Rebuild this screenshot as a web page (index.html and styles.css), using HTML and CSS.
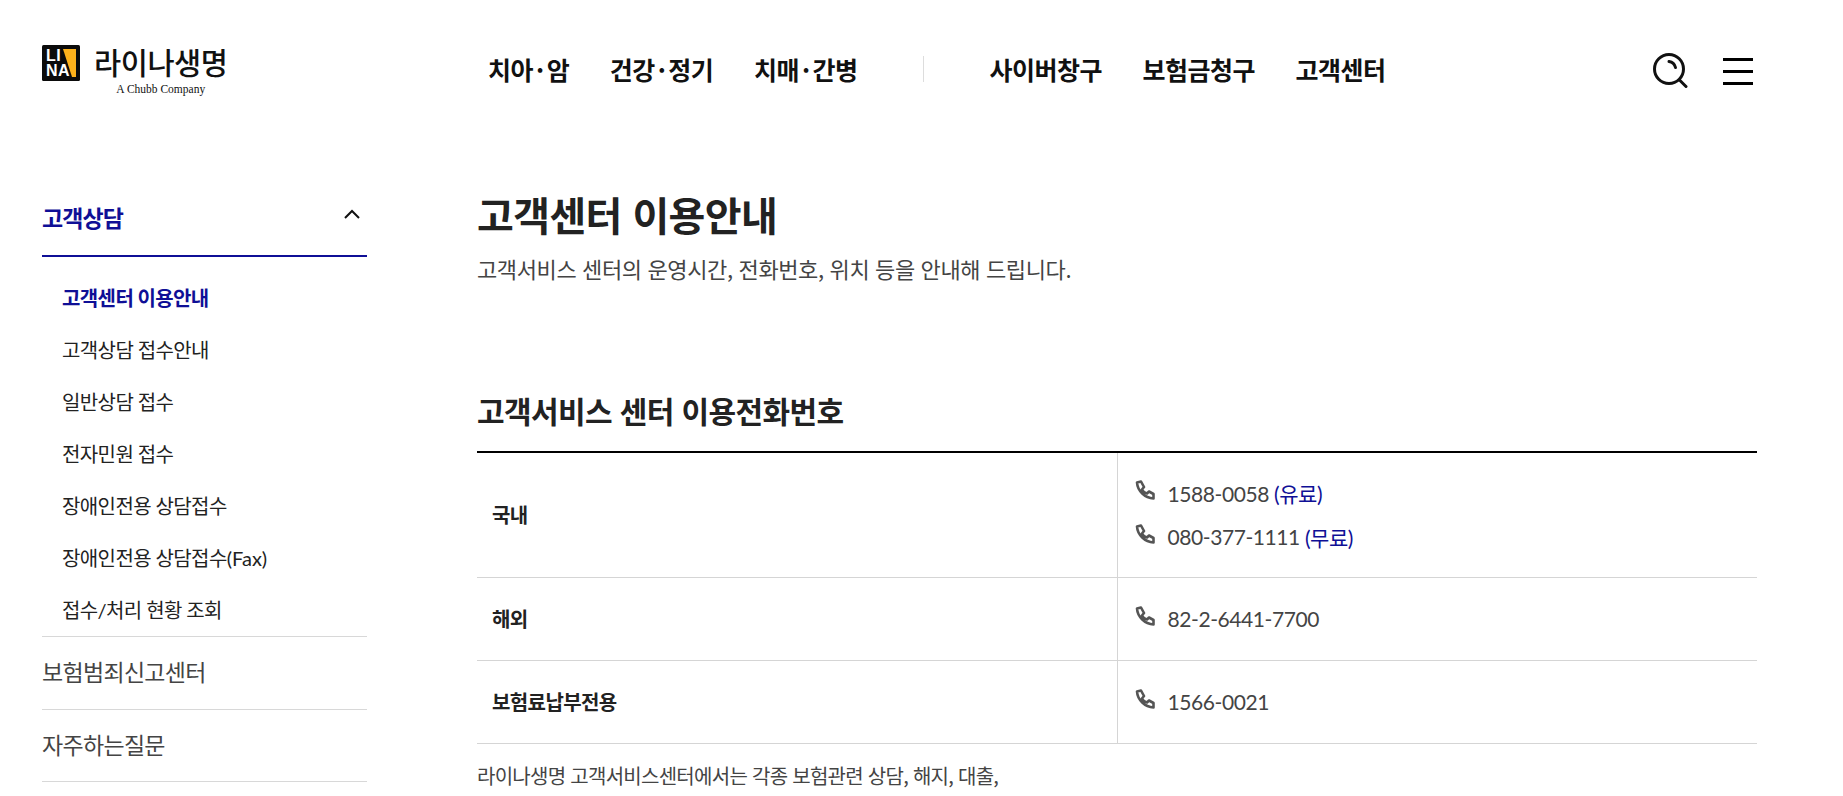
FILE: index.html
```html
<!DOCTYPE html>
<html lang="ko">
<head>
<meta charset="UTF-8" />
<title>고객센터 이용안내 | 라이나생명</title>
<link rel="stylesheet" href="styles.css">
</head>
<body>

<header class="header">
  <a class="logo" href="#">
    <svg class="logo-mark" width="38" height="36" viewBox="0 0 38 36">
      <rect width="38" height="36" rx="1.5" fill="#0b0b0b"/>
      <path d="M21 4 H34 V32 H30 Z" fill="#fdb11b"/>
    </svg>
    <span class="logo-li">LI</span>
    <span class="logo-na">NA</span>
    <span class="logo-text">
      <span class="logo-name">라이나생명</span>
      <span class="logo-sub">A Chubb Company</span>
    </span>
  </a>
  <nav class="gnb">
    <a href="#">치아<span class="dot">·</span>암</a>
    <a href="#">건강<span class="dot">·</span>정기</a>
    <a href="#">치매<span class="dot">·</span>간병</a>
    <span class="gnb-line"></span>
    <a href="#">사이버창구</a>
    <a href="#">보험금청구</a>
    <a href="#">고객센터</a>
  </nav>
  <div class="header-icons">
    <svg width="36" height="36" viewBox="0 0 36 36" fill="none" stroke="#111" stroke-linecap="round">
      <circle cx="17" cy="16" r="14.500" stroke-width="3"/>
      <path d="M17 8.500 a8 8 0 0 1 6.500 6" stroke-width="3"/>
      <path d="M27.500 27 L34 33.500" stroke-width="3"/>
    </svg>
    <div class="menu-btn"><i></i><i></i><i></i></div>
  </div>
</header>

<div class="wrap">
  <aside class="side">
    <div class="side-head">
      <span>고객상담</span>
      <svg width="16" height="10" viewBox="0 0 16 10" fill="none" stroke="#111" stroke-width="2"><path d="M1 9 L8 2 L15 9"/></svg>
    </div>
    <ul class="side-sub">
      <li class="on">고객센터 이용안내</li>
      <li>고객상담 접수안내</li>
      <li>일반상담 접수</li>
      <li>전자민원 접수</li>
      <li>장애인전용 상담접수</li>
      <li>장애인전용 상담접수<span class="en">(Fax)</span></li>
      <li>접수/처리 현황 조회</li>
    </ul>
    <div class="side-item">보험범죄신고센터</div>
    <div class="side-item">자주하는질문</div>
  </aside>

  <main class="main">
    <h1>고객센터 이용안내</h1>
    <p class="lead">고객서비스 센터의 운영시간, 전화번호, 위치 등을 안내해 드립니다.</p>

    <h2>고객서비스 센터 이용전화번호</h2>
    <table class="tel-table">
      <tr class="row-double">
        <th>국내</th>
        <td>
          <div class="tel"><svg class="ico"><use href="#phone"/></svg>1588-0058 <em>(유료)</em></div>
          <div class="tel"><svg class="ico"><use href="#phone"/></svg>080-377-1111 <em>(무료)</em></div>
        </td>
      </tr>
      <tr>
        <th>해외</th>
        <td><div class="tel"><svg class="ico"><use href="#phone"/></svg>82-2-6441-7700</div></td>
      </tr>
      <tr>
        <th>보험료납부전용</th>
        <td><div class="tel"><svg class="ico"><use href="#phone"/></svg>1566-0021</div></td>
      </tr>
    </table>
    <p class="note">라이나생명 고객서비스센터에서는 각종 보험관련 상담, 해지, 대출,</p>
  </main>
</div>

<svg width="0" height="0" class="defs">
  <symbol id="phone" viewBox="0 0 20 20">
    <path d="M2 2.500 L6 1.500 L9 7 L7 9.500 C8 11.500 10 13 12 13.500 L14 11.500 L18.500 14 V18.500 C10 18 2.500 11 2 2.500 Z" fill="none" stroke="#555" stroke-width="2.600" stroke-linejoin="round"/>
  </symbol>
</svg>

</body>
</html>
```

FILE: styles.css
```css
* {
  box-sizing: border-box;
}

html, body {
  height: 796px;
  overflow: hidden;
}

body {
  margin: 0;
  background: #fff;
  color: #222;
  font-family: "Lato", "Noto Sans CJK KR", sans-serif;
  letter-spacing: -0.02em;
}

a {
  color: inherit;
  text-decoration: none;
}

.header {
  display: flex;
  align-items: center;
  height: 142px;
  padding: 0 42px;
}

.logo {
  position: relative;
  display: flex;
  align-items: flex-start;
  width: 446px;
  height: 52px;
  margin-top: -1px;
}

.logo-mark {
  flex: none;
}

.logo-li, .logo-na {
  position: absolute;
  left: 4px;
  color: #fff;
  font: 700 16px/1 "Liberation Sans", sans-serif;
  letter-spacing: 0.5px;
}

.logo-li {
  top: 3px;
}

.logo-na {
  top: 18px;
}

.logo-text {
  display: flex;
  flex-direction: column;
  align-items: center;
  margin-left: 14px;
  margin-top: -2px;
  color: #111;
}

.logo-name {
  font: 500 29.500px/36px "Noto Sans CJK KR", sans-serif;
  letter-spacing: -0.015em;
}

.logo-sub {
  font: 11.500px/14px "Liberation Serif", serif;
  letter-spacing: 0;
  margin-top: 3px;
}

.gnb {
  display: flex;
  align-items: center;
  flex: 1;
  gap: 40.500px;
  margin-top: -4px;
  color: #111;
  font: 700 25px/34px "Noto Sans CJK KR", sans-serif;
  letter-spacing: -0.02em;
}

.dot {
  margin: 0 3px;
}

.gnb-line {
  width: 1px;
  height: 26px;
  margin: 0 25px;
  background: #ddd;
}

.header-icons {
  display: flex;
  align-items: center;
  gap: 35px;
  padding-right: 48px;
}

.menu-btn {
  display: flex;
  flex-direction: column;
  gap: 9px;
  width: 30px;
}

.menu-btn i {
  display: block;
  height: 3px;
  background: #000;
}

.wrap {
  display: flex;
  align-items: flex-start;
  gap: 110px;
  padding: 0 86px 0 42px;
}

.side {
  flex: none;
  width: 325px;
}

.side-head {
  display: flex;
  align-items: center;
  justify-content: space-between;
  height: 115px;
  padding: 37px 7px 0 0;
  border-bottom: 2px solid #0f0f96;
  color: #0f0f96;
  font: 700 23px/32px "Noto Sans CJK KR", sans-serif;
  letter-spacing: -0.04em;
}

.side-head svg {
  margin-top: -7px;
}

.side-sub {
  margin: 0;
  padding: 15px 0 0 20px;
  list-style: none;
  font: 400 20px/52px "Lato", "Noto Sans CJK KR", sans-serif;
  letter-spacing: -0.03em;
}

.side-sub .on {
  color: #0f0f96;
  font-weight: 700;
}

.en {
  letter-spacing: 0;
}

.side-item {
  height: 72.500px;
  border-top: 1px solid #d8d8d8;
  color: #444;
  font: 400 23px/68px "Noto Sans CJK KR", sans-serif;
  letter-spacing: -0.03em;
}

.side-item:last-child {
  height: 73.500px;
  border-bottom: 1px solid #d8d8d8;
}

.main {
  flex: 1;
  min-width: 0;
  padding-top: 44px;
}

h1 {
  margin: 0;
  font: 700 40px/56px "Noto Sans CJK KR", sans-serif;
  letter-spacing: -0.015em;
}

.lead {
  margin: 9px 0 0;
  color: #444;
  font: 400 22px/34px "Noto Sans CJK KR", sans-serif;
  letter-spacing: -0.017em;
}

h2 {
  margin: 103px 0 0;
  padding-bottom: 19px;
  font: 700 30px/44px "Noto Sans CJK KR", sans-serif;
  letter-spacing: -0.02em;
}

.tel-table {
  width: 100%;
  border-collapse: collapse;
  border-top: 2px solid #000;
}

.tel-table th, .tel-table td {
  border-bottom: 1px solid #d5d5d5;
}

.tel-table tr {
  height: 83px;
}

.tel-table .row-double {
  height: 125px;
}

.tel-table th {
  width: 640px;
  padding-left: 15px;
  border-right: 1px solid #d5d5d5;
  color: #222;
  text-align: left;
  font: 700 20px/30px "Noto Sans CJK KR", sans-serif;
  letter-spacing: -0.03em;
}

.tel-table td {
  padding: 0 15px 0 17px;
  color: #444;
  font-size: 21px;
  letter-spacing: -0.02em;
}

.tel {
  display: flex;
  align-items: center;
  gap: 5px;
  height: 43.500px;
}

.tel em {
  color: #0f0f96;
  font-style: normal;
}

.ico {
  flex: none;
  width: 20px;
  height: 20px;
  margin-right: 8px;
  margin-top: -6px;
}

.note {
  margin: 17px 0 0;
  color: #444;
  font: 400 20px/30px "Noto Sans CJK KR", sans-serif;
  letter-spacing: -0.036em;
}

.defs {
  position: absolute;
}
```
